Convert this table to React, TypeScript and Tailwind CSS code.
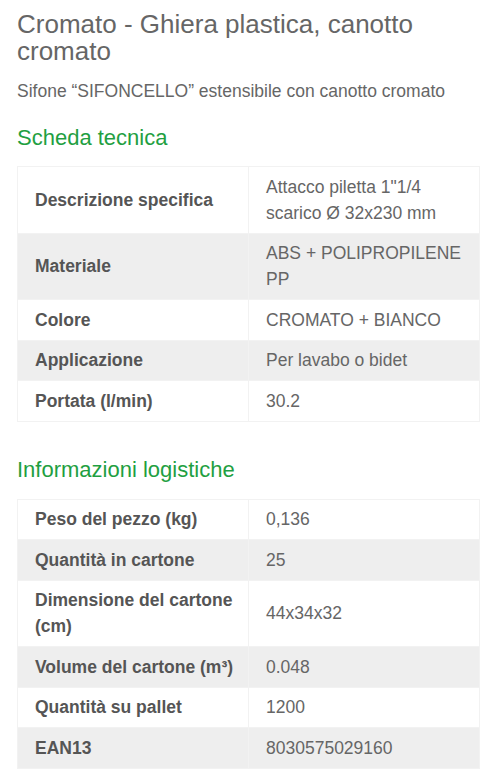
import React from 'react';

const scheda: [string, string][] = [
  ['Descrizione specifica', 'Attacco piletta 1"1/4 scarico Ø 32x230 mm'],
  ['Materiale', 'ABS + POLIPROPILENE PP'],
  ['Colore', 'CROMATO + BIANCO'],
  ['Applicazione', 'Per lavabo o bidet'],
  ['Portata (l/min)', '30.2'],
];

const logistica: [string, string][] = [
  ['Peso del pezzo (kg)', '0,136'],
  ['Quantità in cartone', '25'],
  ['Dimensione del cartone (cm)', '44x34x32'],
  ['Volume del cartone (m³)', '0.048'],
  ['Quantità su pallet', '1200'],
  ['EAN13', '8030575029160'],
];

const SpecTable: React.FC<{ rows: [string, string][] }> = ({ rows }) => (
  <table className="w-full border-collapse border border-[#f2f2f2] text-[17.5px] leading-[26px]">
    <tbody>
      {rows.map(([k, v], i) => (
        <tr key={k} className={i % 2 === 1 ? 'bg-[#eeeeee]' : 'bg-white'}>
          <td className="w-1/2 border border-[#f2f2f2] py-[6.75px] pl-[17px] pr-2 align-middle font-bold text-[#555]">
            {k}
          </td>
          <td className="w-1/2 border border-[#f2f2f2] py-[6.75px] pl-[17px] pr-2 align-middle text-[#666]">
            {v}
          </td>
        </tr>
      ))}
    </tbody>
  </table>
);

const App: React.FC = () => {
  return (
    <div className="min-h-screen bg-white pl-[17px] pr-[3px] pt-[11px] font-['Liberation_Sans',Arial,sans-serif]">
      <h1 className="text-[26px] leading-[27px] text-[#666] pr-10">
        Cromato - Ghiera plastica, canotto cromato
      </h1>
      <p className="mt-[15px] text-[17.5px] leading-[22px] text-[#666]">
        Sifone “SIFONCELLO” estensibile con canotto cromato
      </p>
      <h2 className="mt-[23px] text-[22px] leading-[26px] text-[#1f9f42]">Scheda tecnica</h2>
      <div className="mt-[15px]">
        <SpecTable rows={scheda} />
      </div>
      <h2 className="mt-[35px] text-[22px] leading-[26px] text-[#1f9f42]">Informazioni logistiche</h2>
      <div className="mt-[16px]">
        <SpecTable rows={logistica} />
      </div>
    </div>
  );
};

export default App;
